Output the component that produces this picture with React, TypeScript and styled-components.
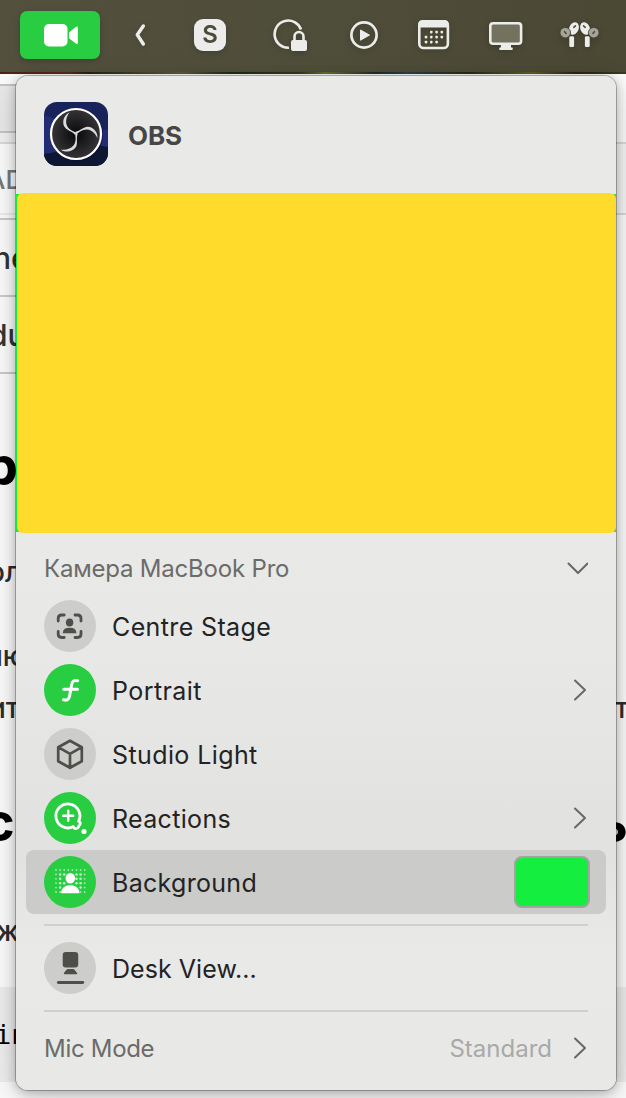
import React from 'react';
import styled, { createGlobalStyle } from 'styled-components';

const GlobalStyle = createGlobalStyle`
  * { box-sizing: border-box; }
  body {
    margin: 0;
    overflow: hidden;
    background: #fafafa;
    font-family: Inter, "Liberation Sans", sans-serif;
  }
`;

const Screen = styled.div`
  position: relative;
  width: 626px;
  height: 1098px;
  overflow: hidden;
`;

const MenuBar = styled.header`
  display: flex;
  align-items: center;
  height: 72px;
  padding: 0 0 2px 20px;
  background: linear-gradient(90deg, #53503e, #4f4e3a 50%, #4b4834);
  color: #ececea;
`;

const CameraButton = styled.div`
  display: flex;
  align-items: center;
  justify-content: center;
  width: 80px;
  height: 48px;
  border-radius: 7px;
  background: #28cd41;
  box-shadow: 0 2px 6px rgba(0, 0, 0, 0.22);
`;

const BarItem = styled.div<{ $gap: number }>`
  display: flex;
  margin-left: ${(p) => p.$gap}px;
  filter: drop-shadow(0 2px 3px rgba(0, 0, 0, 0.2));
`;

const SkypeTile = styled.div`
  width: 32px;
  height: 32px;
  border-radius: 9px;
  background: #ececea;
  color: #4d4b39;
  font-size: 24px;
  font-weight: 600;
  line-height: 32px;
  text-align: center;
`;

const WallpaperEdge = styled.div`
  height: 2px;
  background: linear-gradient(90deg, #4a2413, #5a2c18 11%, #262415 14%, #5e5a36 29%, #1d2a1c 37%, #343c1c 48%, #6a7030 52%, #1f2c28 60%, #294050 65%, #282a14 75%, #60602a 85%, #2a2414 92%, #3c3a1c);
`;

const Page = styled.main`
  display: flex;
  justify-content: space-between;
  height: 1024px;
  background: #fafafa;
`;

const Column = styled.div<{ $width: number }>`
  width: ${(p) => p.$width}px;
  overflow: hidden;
  white-space: nowrap;
`;

const Band = styled.div<{ $h: number; $bg?: string; $line?: string }>`
  display: flex;
  align-items: center;
  height: ${(p) => p.$h}px;
  background: ${(p) => p.$bg ?? 'transparent'};
  border-top: ${(p) => (p.$line ? `2px solid ${p.$line}` : 'none')};
`;

const PageText = styled.div<{ $size: number; $x: number; $top?: number; $bold?: boolean; $mono?: boolean; $color?: string }>`
  margin-left: ${(p) => p.$x}px;
  margin-top: ${(p) => p.$top ?? 0}px;
  font-size: ${(p) => p.$size}px;
  line-height: ${(p) => p.$size}px;
  font-weight: ${(p) => (p.$bold ? 700 : 450)};
  font-family: ${(p) => (p.$mono ? '"DejaVu Sans Mono", monospace' : 'inherit')};
  color: ${(p) => p.$color ?? '#2d2d2d'};
`;

const Popover = styled.section`
  position: absolute;
  left: 16px;
  top: 76px;
  width: 600px;
  height: 1014px;
  border-radius: 12px;
  background: linear-gradient(180deg, #e9e9e7 0, #e9e9e8 46%, #e8e8e7 57%, #e2e2e0 73%, #e2e2e0 77%, #e9e9e7 86%, #e8e8e6 100%);
  box-shadow: 0 0 0 1px rgba(0, 0, 0, 0.26), 0 2px 12px rgba(0, 0, 0, 0.28), 0 10px 34px rgba(0, 0, 0, 0.14);
`;

const AppHeader = styled.div`
  display: flex;
  align-items: center;
  gap: 20px;
  height: 117px;
  padding: 0 28px 2px;
`;

const AppName = styled.h1`
  margin: 5px 0 0;
  font-size: 26px;
  line-height: 32px;
  font-weight: 650;
  letter-spacing: -0.1px;
  color: #464646;
`;

const Preview = styled.div`
  height: 340px;
  padding-left: 1px;
  background: linear-gradient(#e9e9e7 1px, #12ee3e 1px, #12ee3e 339px, #e9e9e7 339px);
`;

const PreviewImage = styled.div`
  height: 100%;
  border-radius: 6px;
  background: #ffdb2c;
`;

const SectionRow = styled.div<{ $h: number; $top?: number; $pad?: number }>`
  display: flex;
  align-items: center;
  height: ${(p) => p.$h}px;
  margin-top: ${(p) => p.$top ?? 0}px;
  padding: ${(p) => p.$pad ?? 0}px 28px 0;
`;

const Label = styled.span<{ $tone?: 'muted' | 'faint'; $track?: number; $size?: number }>`
  padding-top: 2px;
  font-size: ${(p) => p.$size ?? 25}px;
  line-height: 32px;
  white-space: nowrap;
  letter-spacing: ${(p) => p.$track ?? 0}px;
  color: ${(p) => (p.$tone === 'faint' ? '#a9a9a8' : p.$tone === 'muted' ? '#6b6b6a' : '#232323')};
`;

const Spacer = styled.span<{ $width?: number }>`
  flex: ${(p) => (p.$width ? `0 0 ${p.$width}px` : '1')};
`;

const Item = styled.div<{ $active?: boolean }>`
  display: flex;
  align-items: center;
  height: 64px;
  margin: 0 10px;
  padding: 0 18px;
  border-radius: 8px;
  background: ${(p) => (p.$active ? '#cbcbc9' : 'transparent')};
`;

const Disc = styled.span<{ $on?: boolean }>`
  display: flex;
  width: 52px;
  height: 52px;
  margin-right: 16px;
  border-radius: 50%;
  background: ${(p) => (p.$on ? '#28cd41' : '#cdcdcb')};
  color: ${(p) => (p.$on ? '#fff' : '#4e4e4b')};
`;

const Swatch = styled.span`
  width: 76px;
  height: 52px;
  margin-right: -2px;
  border: 2px solid #a3a3a1;
  border-radius: 8px;
  background: #14ee3e;
`;

const Divider = styled.hr`
  height: 2px;
  margin: 10px 28px;
  border: 0;
  background: #cfcfce;
`;

const Chevron = ({ down }: { down?: boolean }) =>
  down ? (
    <svg width="22" height="14" viewBox="0 0 22 14" fill="none" stroke="#686868" strokeWidth="2" strokeLinecap="round" strokeLinejoin="round">
      <path d="M2.500 2.500 12 12l9.500-9.500" />
    </svg>
  ) : (
    <svg width="16" height="22" viewBox="0 0 16 22" fill="none" stroke="#686868" strokeWidth="2" strokeLinecap="round" strokeLinejoin="round">
      <path d="M3 1.500 13 11 3 20.500" />
    </svg>
  );

const ObsLogo = () => (
  <svg width="64" height="64" viewBox="0 0 64 64">
    <defs>
      <clipPath id="tile"><rect width="64" height="64" rx="13" /></clipPath>
      <radialGradient id="disc"><stop offset="0" stopColor="#080809" /><stop offset="1" stopColor="#363438" /></radialGradient>
    </defs>
    <g clipPath="url(#tile)">
      <path fill="#17235a" d="M0 0h64v64H0z" />
      <path fill="#232d73" d="M0 13q14 4 30 14 18 6 34 0v18L0 54z" />
      <path fill="#0d1734" d="M0 52q16-2 30-7 18-4 34 0v19H0z" />
    </g>
    <circle cx="33" cy="33.500" r="26" fill="#080d25" opacity=".45" />
    <circle cx="32" cy="32" r="25" fill="url(#disc)" stroke="#fff" strokeWidth="2.200" />
    <g fill="#dedbde">
      {[0, 120, 240].map((a) => (
        <path key={a} transform={`rotate(${a} 32 31.500)`} d="M25.500 10.500C20 13 17.800 19.500 20.300 24.600 22.500 28.500 27.800 29 30.800 32.700L33 30.600C29.500 30 24.500 27.500 22.900 23.600 21.300 19.500 22.300 14.500 25.500 10.500z" />
      ))}
    </g>
  </svg>
);

const DotGrid = () => {
  const cells: React.ReactNode[] = [];
  for (let r = 0; r < 6; r++) {
    for (let c = 0; c < 8; c++) {
      const x = 12 + c * 4.100;
      const y = 14 + r * 4.400;
      const nearHead = Math.hypot(x - 26.300, y - 22) < 6.200;
      const nearBody = r >= 4 && Math.abs(x - 26.300) < 10;
      if (nearHead || nearBody) continue;
      const edge = c === 0 || c === 7 || r === 0 || r === 5;
      cells.push(<circle key={`${r}-${c}`} cx={x} cy={y} r={edge ? 0.900 : 1.250} opacity={edge ? 0.600 : 0.750} />);
    }
  }
  return <>{cells}</>;
};

const icons: Record<string, React.ReactNode> = {
  stage: (
    <>
      <path fill="none" stroke="currentColor" strokeWidth="2.800" strokeLinecap="round" d="M14.200 21v-2.500q0-3.500 3.500-3.500h2.500M31 15h2.500q3.500 0 3.500 3.500V21M37 31.500V34q0 3.500-3.500 3.500H31M20.200 37.500h-2.500q-3.500 0-3.500-3.500v-2.500" />
      <ellipse cx="25.600" cy="22.500" rx="3.700" ry="4.100" />
      <path d="M18.800 33.200q0-5.400 6.800-5.400t6.800 5.400z" />
    </>
  ),
  portrait: (
    <path fill="none" stroke="currentColor" strokeWidth="3" strokeLinecap="round" d="M33.700 16.700c-3.400-1-5.600.5-6.100 4l-2 11.300c-.6 3.300-2.500 4.800-6.100 3.800M19.800 25.200h13.700" />
  ),
  cube: (
    <path fill="none" stroke="currentColor" strokeWidth="2.700" strokeLinejoin="round" strokeLinecap="round" d="M26 12.800 37.800 19.200v14L26 39.800 14.200 33.200v-14zM14.200 19.200 26 25.900l11.800-6.700M26 25.900v13.900" />
  ),
  reactions: (
    <>
      <path fill="none" stroke="currentColor" strokeWidth="2.800" strokeLinecap="round" strokeLinejoin="round" d="M29.300 34.600A12 12 0 1 1 34.600 29.300a2.300 2.300 0 0 1 1.200 3.600q-1.200.7-1.200 1.900a2.800 2.800 0 0 1-5.300-.2z" />
      <path fill="none" stroke="currentColor" strokeWidth="2.500" strokeLinecap="round" d="M24.200 18.700v10M19.200 23.700h10" />
      <circle cx="40" cy="39.500" r="2.600" />
    </>
  ),
  background: (
    <>
      <DotGrid />
      <ellipse cx="26.300" cy="22.300" rx="4.800" ry="5.300" />
      <path d="M17.300 37.300q-.6-1 .4-3.200 2-4.900 8.600-4.900t8.600 4.900q1 2.200.4 3.200z" />
    </>
  ),
  desk: (
    <>
      <rect x="18.700" y="10" width="15.500" height="15.500" rx="3" />
      <path d="M24 27h5q1 0 1.500.8l2.600 3.300q.5 1.100-.6 1.100H20.500q-1.100 0-.6-1.100l2.600-3.300q.5-.8 1.500-.8z" />
      <path stroke="currentColor" strokeWidth="2.800" strokeLinecap="round" d="M14.300 40.500h24.500" />
    </>
  ),
};

const Glyph = ({ name, on }: { name: string; on?: boolean }) => (
  <Disc $on={on}>
    <svg width="52" height="52" viewBox="0 0 52 52" fill="currentColor">{icons[name]}</svg>
  </Disc>
);

const StatusIcons = () => (
  <>
    <BarItem $gap={34}>
      <svg width="12" height="24" viewBox="0 0 12 24" fill="none" stroke="currentColor" strokeWidth="3.400" strokeLinecap="round" strokeLinejoin="round"><path d="M9.300 3 3.300 11.800 9.300 21" /></svg>
    </BarItem>
    <BarItem $gap={48}><SkypeTile>S</SkypeTile></BarItem>
    <BarItem $gap={47}>
      <svg width="34" height="32" viewBox="0 0 34 32" fill="none" stroke="currentColor">
        <path strokeWidth="2.600" d="M16 28.700A13.600 13.600 0 1 1 28 10.500" />
        <path strokeWidth="2.600" d="M21.500 22v-4.500a4.500 4.500 0 0 1 9 0V22" />
        <rect x="18" y="21" width="16" height="11" rx="2" fill="currentColor" stroke="none" />
      </svg>
    </BarItem>
    <BarItem $gap={43}>
      <svg width="28" height="28" viewBox="0 0 28 28"><circle cx="14" cy="14" r="12.600" fill="none" stroke="currentColor" strokeWidth="2.700" /><path fill="currentColor" stroke="currentColor" strokeLinejoin="round" d="M10.500 9v10.200l9-5.100z" /></svg>
    </BarItem>
    <BarItem $gap={40}>
      <svg width="32" height="30" viewBox="0 0 32 30" fill="currentColor">
        <rect x="1.300" y="1.400" width="28.600" height="26.600" rx="4.300" fill="none" stroke="currentColor" strokeWidth="2.600" />
        <path d="M0 7.500V5q0-5 5-5h21q5 0 5 5v2.500z" />
        {[[12, 12], [17.300, 12], [22.500, 12], [6.700, 17], [12, 17], [17.300, 17], [22.500, 17], [6.700, 22], [12, 22], [17.300, 22]].map(([x, y]) => (
          <rect key={`${x}-${y}`} x={x} y={y - 1.200} width="2.600" height="2.600" rx=".8" />
        ))}
      </svg>
    </BarItem>
    <BarItem $gap={39}>
      <svg width="34" height="30" viewBox="0 0 34 30" fill="currentColor">
        <rect x="1.300" y="3.200" width="30.800" height="20.600" rx="2.800" fill="#72725f" stroke="currentColor" strokeWidth="2.600" />
        <path d="M12 24h10v3.500h1q.8 0 .8 1.200t-.8 1.200h-12q-.8 0-.8-1.200t.8-1.200h.8z" />
      </svg>
    </BarItem>
    <BarItem $gap={37}>
      <svg width="40" height="28" viewBox="0 0 40 28" fill="currentColor">
        {[false, true].map((flip) => (
          <g key={String(flip)} transform={flip ? 'translate(39 0) scale(-1 1)' : undefined}>
            <ellipse cx="13.900" cy="7.500" rx="4.700" ry="6.500" transform="rotate(22 13.900 7.500)" />
            <rect x="9.300" y="15.300" width="4.800" height="10.700" rx="1.300" />
            <circle cx="5.300" cy="11.700" r="5.700" fill="#4d4b39" />
            <circle cx="5.300" cy="11.700" r="4.800" fill="#a5a498" />
            <path stroke="#4d4b39" strokeWidth="1.600" strokeLinecap="round" d="m13.800 6.300 1.600-1.400M4.600 10.700l1.500 1.800" />
          </g>
        ))}
      </svg>
    </BarItem>
  </>
);

const App = () => (
  <Screen>
    <GlobalStyle />
    <MenuBar>
      <CameraButton>
        <svg width="36" height="24" viewBox="0 0 36 24" fill="#fff">
          <rect x="2" y="1" width="23.500" height="22.500" rx="5" />
          <path d="M27 9.500 33.800 4q2-1.300 2 .8v15q0 2.100-2 .8L27 15.200z" />
        </svg>
      </CameraButton>
      <StatusIcons />
    </MenuBar>
    <WallpaperEdge />
    <Page>
      <Column $width={300}>
        <Band $h={10} />
        <Band $h={47} $bg="#e8e8e8" $line="#c4c4c4" />
        <Band $h={11} $bg="#f0f0f0" $line="#c4c4c4" />
        <Band $h={71} $line="#d8d8d8"><PageText $size={26} $x={-13} $top={2} $color="#777">AD</PageText></Band>
        <Band $h={5} $line="#eaeaea" />
        <Band $h={77} $line="#c9c9c9"><PageText $size={30} $x={-7} $color="#333">ne</PageText></Band>
        <Band $h={77} $line="#c9c9c9"><PageText $size={30} $x={-11} $color="#333">du</PageText></Band>
        <Band $h={2} $line="#c9c9c9" />
        <PageText $size={54} $x={-16} $top={65} $bold $color="#000">р</PageText>
        <PageText $size={28} $x={-12} $top={65}>ол</PageText>
        <PageText $size={28} $x={-14} $top={56}>ню</PageText>
        <PageText $size={28} $x={-11} $top={24}>ит</PageText>
        <PageText $size={54} $x={-17} $top={73} $bold $color="#000">с</PageText>
        <PageText $size={28} $x={-4} $top={68}>ж</PageText>
        <Band $h={42} />
        <Band $h={95} $bg="#ececec"><PageText $size={27} $x={-5} $mono $color="#000">in</PageText></Band>
      </Column>
      <Column $width={10}>
        <Band $h={68} />
        <Band $h={71} $bg="#f4f4f4" $line="#d8d8d8" />
        <Band $h={2} $line="#d8d8d8" />
        <PageText $size={28} $x={-1} $top={479}>т</PageText>
        <PageText $size={54} $x={-20} $top={74} $bold $color="#000">ь</PageText>
        <Band $h={137} />
        <Band $h={95} $bg="#ececec" />
      </Column>
    </Page>
    <Popover>
      <AppHeader>
        <ObsLogo />
        <AppName>OBS</AppName>
      </AppHeader>
      <Preview><PreviewImage /></Preview>
      <SectionRow $h={61} $pad={8}>
        <Label $tone="muted" $size={24} $track={-0.2}>Камера MacBook Pro</Label>
        <Spacer />
        <Chevron down />
      </SectionRow>
      <Item><Glyph name="stage" /><Label $track={0.37}>Centre Stage</Label></Item>
      <Item><Glyph name="portrait" on /><Label $track={0.43}>Portrait</Label><Spacer /><Chevron /></Item>
      <Item><Glyph name="cube" /><Label $track={0.4}>Studio Light</Label></Item>
      <Item><Glyph name="reactions" on /><Label $track={0.33}>Reactions</Label><Spacer /><Chevron /></Item>
      <Item $active><Glyph name="background" on /><Label $track={0.3}>Background</Label><Spacer /><Swatch /></Item>
      <Divider />
      <Item><Glyph name="desk" /><Label $track={0.05}>Desk View...</Label></Item>
      <Divider />
      <SectionRow $h={64} $top={-6}>
        <Label $tone="muted" $size={24} $track={-0.3}>Mic Mode</Label>
        <Spacer />
        <Label $tone="faint" $size={24}>Standard</Label>
        <Spacer $width={20} />
        <Chevron />
      </SectionRow>
    </Popover>
  </Screen>
);

export default App;
